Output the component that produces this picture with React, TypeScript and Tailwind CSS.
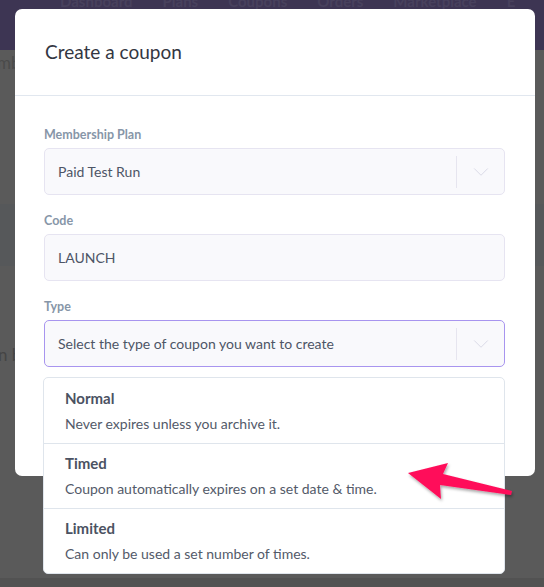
import { ChevronDown } from 'lucide-react'

const options = [
  { title: 'Normal', desc: 'Never expires unless you archive it.' },
  { title: 'Timed', desc: 'Coupon automatically expires on a set date & time.' },
  { title: 'Limited', desc: 'Can only be used a set number of times.' },
]

function Field({ label, value, select, active }: { label: string; value: string; select?: boolean; active?: boolean }) {
  return (
    <div className="flex flex-col">
      <label className="mb-[5px] text-[12.5px] font-bold leading-4 text-[#8796a8]">{label}</label>
      <div
        className={`flex h-[47px] items-center rounded-[5px] border bg-[#f9f9fc] pl-[13px] text-[14px] text-[#4d5566] ${
          active ? 'border-[#a895ef]' : 'border-[#e6e4f1]'
        }`}
      >
        <span className="flex-1">{value}</span>
        {select && (
          <div className="flex h-full items-center">
            <div className="h-[32px] w-px bg-[#e6e5ef]" />
            <div className="flex w-[47px] items-center justify-center">
              <ChevronDown size={26} strokeWidth={0.9} className="text-[#d9d9e6]" />
            </div>
          </div>
        )}
      </div>
    </div>
  )
}

export default function App() {
  return (
    <div className="relative h-[587px] w-[544px] overflow-hidden bg-[#5a5a5a] font-['Lato',sans-serif]">
      {/* page behind the overlay */}
      <div className="flex h-[50px] items-start gap-[30px] bg-[#3d3553] pl-[60px] text-[15px] font-bold leading-none text-[#48415d]">
        <span className="-mt-[6px]">Dashboard</span>
        <span className="-mt-[6px]">Plans</span>
        <span className="-mt-[6px]">Coupons</span>
        <span className="-mt-[6px]">Orders</span>
        <span className="-mt-[6px]">Marketplace</span>
        <span className="-mt-[6px]">E</span>
      </div>
      <div className="pt-0 text-[17px] text-[#4a4a4a]">
        <span className="-ml-[3px]">mb</span>
      </div>
      <div className="mt-[128px] h-[62px] bg-[#56585a]" />
      <div className="mt-[76px] text-[17px] text-[#454545]">
        <span className="-ml-[2px]">n b</span>
      </div>
      <div className="absolute bottom-0 left-0 h-[9px] w-full bg-[#525252]" />

      {/* modal */}
      <div className="absolute left-[15px] top-[9px] h-[467px] w-[520px] rounded-[7px] bg-white">
        <div className="flex h-[87px] items-center border-b border-[#e1e7ef] px-[30px]">
          <h2 className="text-[19px] text-[#333642]">Create a coupon</h2>
        </div>
        <div className="flex flex-col gap-[18px] pl-[29px] pr-[30px] pt-[31px]">
          <Field label="Membership Plan" value="Paid Test Run" select />
          <Field label="Code" value="LAUNCH" />
          <Field label="Type" value="Select the type of coupon you want to create" select active />
        </div>
      </div>

      {/* dropdown */}
      <div className="absolute left-[43px] top-[377px] w-[462px] rounded-[5px] border border-[#dfe5ec] bg-white">
        {options.map((o, i) => (
          <div
            key={o.title}
            className={`flex h-[65px] flex-col justify-center gap-[8px] pl-[21px] ${i > 0 ? 'border-t border-[#dfe5ec]' : ''}`}
          >
            <div className="text-[15px] font-bold leading-[18px] text-[#4b5262]">{o.title}</div>
            <div className="text-[14px] leading-[18px] text-[#535a69]">{o.desc}</div>
          </div>
        ))}
      </div>

      {/* annotation arrow */}
      <svg className="absolute left-[400px] top-[455px]" width="130" height="55" viewBox="400 455 130 55">
        <defs>
          <filter id="sh" x="-20%" y="-40%" width="140%" height="180%">
            <feDropShadow dx="1" dy="2" stdDeviation="1.5" floodColor="#000" floodOpacity="0.35" />
          </filter>
        </defs>
        <polygon
          points="408,473 448,463 443,474 512,491 511,495 440,485 441,499"
          fill="#ff0f5a"
          filter="url(#sh)"
        />
      </svg>
    </div>
  )
}
